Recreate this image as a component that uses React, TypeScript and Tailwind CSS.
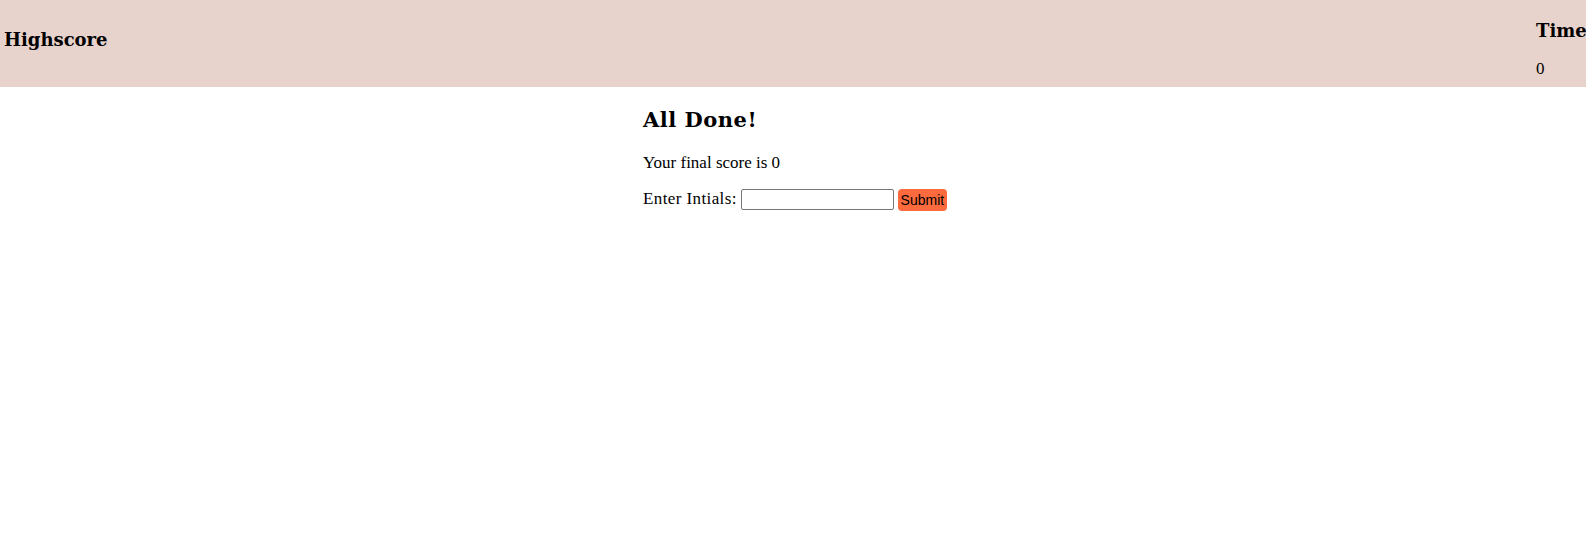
export default function App() {
  return (
    <div className="min-h-screen bg-white text-black font-['Liberation_Serif',serif]">
      <header className="flex h-[87px] items-start justify-between overflow-hidden bg-[#e8d3cc]">
        <h3 className="ml-1 mt-[31px] font-['DejaVu_Serif',serif] text-[18px] font-bold leading-[18px]">
          Highscore
        </h3>
        <div className="w-[50px] shrink-0 whitespace-nowrap">
          <h3 className="mt-[22px] font-['DejaVu_Serif',serif] text-[18px] font-bold leading-[18px]">
            Time
          </h3>
          <p className="mt-[20px] text-[17px] leading-[17px]">0</p>
        </div>
      </header>

      <main className="mx-auto w-[300px]">
        <h2 className="mt-[22px] font-['DejaVu_Serif',serif] text-[21px] font-bold leading-[21px] tracking-[0.5px]">
          All Done!
        </h2>
        <p className="mt-[24px] text-[17px] leading-[17px]">Your final score is 0</p>
        <div className="mt-[18px] flex items-start">
          <label className="mt-[1px] shrink-0 whitespace-nowrap text-[17px] leading-[17px] tracking-[0.4px]">
            Enter Intials:
          </label>
          <input
            type="text"
            className="ml-[4px] h-[21px] w-[153px] shrink-0 rounded-[2px] border border-[#767676] bg-white px-1 font-['Liberation_Sans',sans-serif] text-[13px]"
          />
          <button className="ml-[4px] h-[22px] w-[49px] shrink-0 rounded-[4px] bg-[#fc6a3d] font-['Liberation_Sans',sans-serif] text-[14px] leading-[22px] text-black">
            Submit
          </button>
        </div>
      </main>
    </div>
  );
}
